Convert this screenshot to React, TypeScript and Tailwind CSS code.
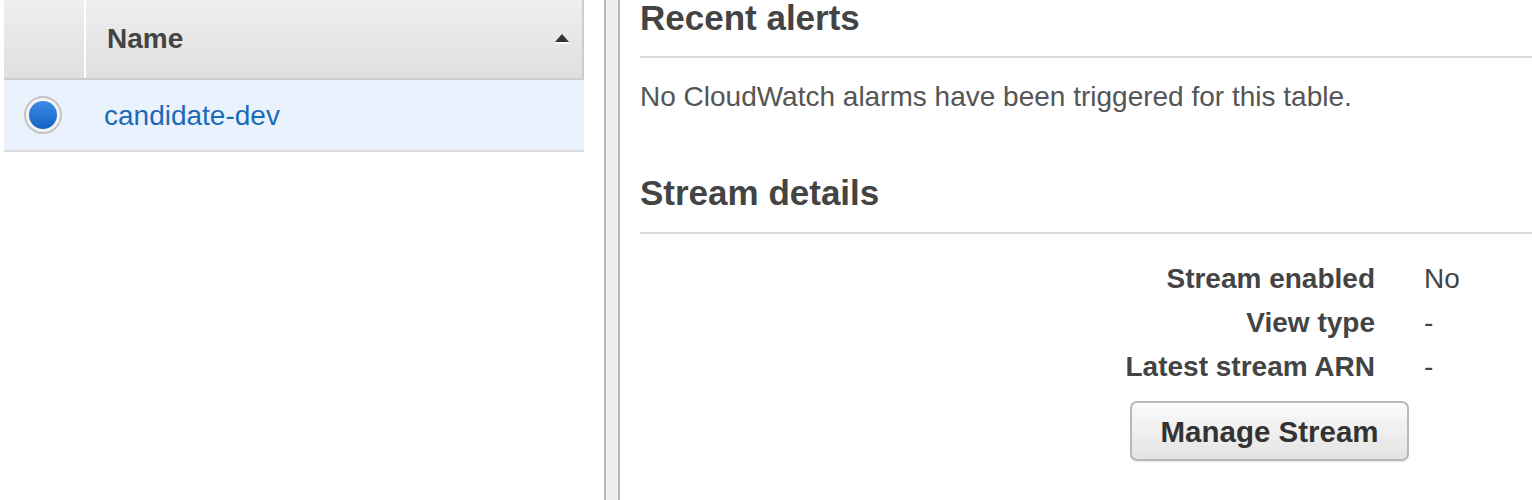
const font = { fontFamily: '"Liberation Sans", Arial, Helvetica, sans-serif' };

function SortCaret() {
  return (
    <svg width="16" height="10" viewBox="0 0 16 10" className="block">
      <polygon points="8,0 15,8 1,8" fill="#333" />
      <rect x="1" y="8" width="14" height="2" fill="#fff" opacity="0.8" />
    </svg>
  );
}

function Radio() {
  return (
    <div className="flex h-[38px] w-[38px] items-center justify-center rounded-full border-2 border-[#c4c4c4] bg-[#f3f3f3]">
      <div className="h-[28px] w-[28px] rounded-full bg-gradient-to-b from-[#3b8ae6] to-[#1462c4]" />
    </div>
  );
}

function TablesList() {
  return (
    <div className="ml-[4px] w-[580px]">
      <div className="flex h-[80px] border-b-[2px] border-r-[2px] border-[#cdcdcd] bg-gradient-to-b from-[#efefef] to-[#dfdfdf]">
        <div className="w-[82px] border-r-[2px] border-white" />
        <div className="flex flex-1 items-center justify-between pl-[21px] pr-[12px]">
          <span className="text-[28px] leading-[32px] font-bold text-[#444]">Name</span>
          <SortCaret />
        </div>
      </div>
      <div className="flex h-[72px] items-center border-b-[2px] border-[#dcdcdc] bg-[#eaf2fd]">
        <div className="flex w-[80px] items-center pl-[20px]">
          <Radio />
        </div>
        <span className="pt-[1px] pl-[20px] text-[28px] leading-[32px] text-[#1a6bb8]">candidate-dev</span>
      </div>
    </div>
  );
}

const streamRows: [string, string][] = [
  ["Stream enabled", "No"],
  ["View type", "-"],
  ["Latest stream ARN", "-"],
];

function TableDetails() {
  return (
    <div className="flex-1 pl-[20px]">
      <h2 className="text-[35px] leading-[36px] font-bold text-[#444]">Recent alerts</h2>
      <div className="mt-[20px] h-[2px] bg-[#dddddd]" />
      <p className="mt-[19px] text-[28px] leading-[40px] text-[#555]">
        No CloudWatch alarms have been triggered for this table.
      </p>
      <h2 className="mt-[58px] text-[35px] leading-[36px] font-bold text-[#444]">Stream details</h2>
      <div className="mt-[21px] h-[2px] bg-[#dddddd]" />
      <div className="mt-[23px] grid grid-cols-[735px_1fr] gap-x-[49px]">
        {streamRows.map(([k, v]) => (
          <div key={k} className="contents">
            <div className="text-right text-[28px] leading-[44px] font-bold text-[#444]">{k}</div>
            <div className="text-[28px] leading-[44px] text-[#444]">{v}</div>
          </div>
        ))}
      </div>
      <div className="mt-[12px] pl-[490px]">
        <button className="h-[60px] w-[279px] rounded-[7px] border-[2px] border-[#b9b9b9] bg-gradient-to-b from-[#fbfbfb] to-[#e3e3e3] pt-[2px] text-[29.5px] font-bold text-[#333] shadow-[0_1px_1px_rgba(0,0,0,0.1)]">
          Manage Stream
        </button>
      </div>
    </div>
  );
}

export default function App() {
  return (
    <div style={font} className="flex h-[500px] w-[1532px] overflow-hidden bg-white">
      <div className="w-[604px] shrink-0">
        <TablesList />
      </div>
      <div className="h-full w-[16px] shrink-0 border-x-[2px] border-[#b8b8b8] bg-[#efefef]" />
      <TableDetails />
    </div>
  );
}
